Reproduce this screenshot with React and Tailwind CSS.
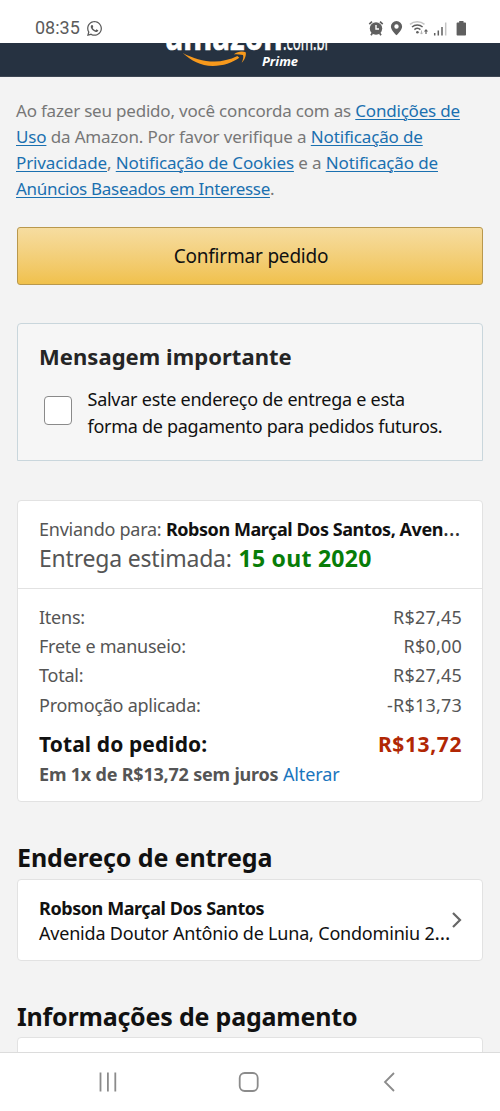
import { FaWhatsapp } from "react-icons/fa";

const summary = [
  { label: "Itens:", value: "R$27,45" },
  { label: "Frete e manuseio:", value: "R$0,00" },
  { label: "Total:", value: "R$27,45" },
  { label: "Promoção aplicada:", value: "-R$13,73" },
];

function Legal({ children }) {
  return (
    <a className="text-[#1a70b0] underline decoration-1 underline-offset-2">
      {children}
    </a>
  );
}

function StatusBar() {
  return (
    <div className="flex h-[43px] shrink-0 items-end justify-between bg-white pr-[32px] pb-[6px] pl-[35px] text-[#5b5b5b]">
      <div className="flex items-center gap-[6px]">
        <span className="font-[Roboto] text-[18px] leading-[18px]">08:35</span>
        <FaWhatsapp className="h-[17px] w-[17px]" />
      </div>

      <svg width="100" height="18" viewBox="0 0 100 18" fill="none">
        {/* alarm */}
        <circle cx="8" cy="9.5" r="6.2" fill="#5f5f5f" />
        <path d="M8 6v4h3" stroke="#fff" strokeWidth="1.4" />
        <path d="M1.3 5.2 4 2.6M14.7 5.2 12 2.6M4.4 14 3 16.3M11.6 14l1.4 2.3" stroke="#5f5f5f" strokeWidth="1.7" />
        {/* location */}
        <path d="M28.500 2a5.600 5.600 0 0 0-5.600 5.600c0 4 5.600 8.700 5.600 8.700s5.600-4.700 5.600-8.700A5.600 5.600 0 0 0 28.500 2Zm0 7.700a2.200 2.200 0 1 1 0-4.400 2.200 2.200 0 0 1 0 4.400Z" fill="#5f5f5f" />
        {/* wifi */}
        <path d="M42 5.400c4-3.400 10.500-3.400 14.500 0" stroke="#c4c4c4" strokeWidth="1.500" />
        <path d="M44 8c3-2.600 7.600-2.600 10.600 0M46.400 10.600c1.800-1.500 4.300-1.500 6 0" stroke="#5f5f5f" strokeWidth="1.500" />
        <circle cx="49.400" cy="13.300" r="1.300" fill="#5f5f5f" />
        <path d="M53.500 11.500v3.500M52.200 13.600l1.300 1.500 1.300-1.500" stroke="#b5b5b5" />
        <path d="M58 15v-3.600" stroke="#5f5f5f" strokeWidth="1.200" />
        <path d="M55.900 12.500 58 10l2.100 2.500Z" fill="#5f5f5f" />
        {/* signal */}
        <path d="M66.700 14v2.500M70.300 11.500v5M74 8v8.500" stroke="#5f5f5f" strokeWidth="1.500" />
        <path d="M77.700 3.500v13" stroke="#c4c4c4" strokeWidth="1.500" />
        {/* battery */}
        <path d="M91.200 2h4.300v1.500h1.700c.5 0 .8.300.8.800v11.400c0 .5-.3.800-.8.800h-7.800c-.5 0-.8-.3-.8-.8V4.300c0-.5.3-.8.800-.8h1.800Z" fill="#5f5f5f" />
      </svg>
    </div>
  );
}

function Logo() {
  return (
    <div className="flex h-[34px] shrink-0 justify-center border-b border-[#3d4653] bg-[#263241]">
      <svg width="180" height="33" viewBox="0 0 180 33" fill="none">
        <text x="5.500" y="6.800" textLength="117" lengthAdjust="spacingAndGlyphs" fill="#fff" stroke="#fff" strokeWidth=".7" fontFamily="Noto Sans, sans-serif" fontWeight="700" fontSize="38">amazon</text>
        <text x="123" y="6.800" textLength="47" lengthAdjust="spacingAndGlyphs" fill="#fff" stroke="#fff" strokeWidth=".3" fontFamily="Noto Sans, sans-serif" fontSize="21">.com.br</text>
        <path d="M22.800 10c8.500 7.500 17.500 12.900 30 13 10.500 0 19.500-3.300 26.500-8.200l-1.900-1.700c-7.400 3.600-15.400 5.500-22.900 5.500-11.500 0-21.600-3.200-31.700-8.600Z" fill="#f7991c" />
        <path d="M74 11.200c3.300-2.700 8.400-3.400 11.700-1.900.8 3-1.200 8.200-4 10.400 1.400-3 2-5.900 1.300-7.700-2-.8-5.700-.3-9-.8Z" fill="#f7991c" />
        <text x="102" y="23" textLength="36" lengthAdjust="spacingAndGlyphs" fill="#fff" fontFamily="Open Sans, sans-serif" fontWeight="700" fontStyle="italic" fontSize="13">Prime</text>
      </svg>
    </div>
  );
}

function NavBar() {
  return (
    <div className="flex h-[59px] shrink-0 items-center justify-center border-t border-[#dcdcdc] bg-white pr-[3px]">
      <svg width="300" height="24" viewBox="0 0 300 24" fill="none" stroke="#8b8b8b" strokeWidth="1.800">
        <path d="M1.500 2.500v19M8.900 2.500v19M16.300 2.500v19" />
        <rect x="140.700" y="3" width="18" height="18" rx="5" />
        <path d="m295 3-9 9 9 9" />
      </svg>
    </div>
  );
}

export default function App() {
  return (
    <div className="flex h-[1111px] w-[500px] flex-col overflow-hidden bg-[#f3f3f3] font-['Noto_Sans',sans-serif] whitespace-nowrap text-[#111]">
      <StatusBar />
      <Logo />

      <main className="flex min-h-0 flex-1 flex-col overflow-hidden px-[17px] pt-[21px]">
        <div className="-ml-px text-[17px] leading-[26px] text-[#777]">
          <p className="tracking-[-0.2px]">
            Ao fazer seu pedido, você concorda com as <Legal>Condições de</Legal>
          </p>
          <p className="tracking-[-0.15px]">
            <Legal>Uso</Legal> da Amazon. Por favor verifique a <Legal>Notificação de</Legal>
          </p>
          <p className="tracking-[-0.13px]">
            <Legal>Privacidade</Legal>, <Legal>Notificação de Cookies</Legal> e a <Legal>Notificação de</Legal>
          </p>
          <p className="tracking-[-0.3px]">
            <Legal>Anúncios Baseados em Interesse</Legal>.
          </p>
        </div>

        <button className="mt-[25px] h-[58px] shrink-0 rounded-[3px] border border-[#b9984c] bg-linear-to-b from-[#f6dda0] to-[#f0c14b] pl-[2px] text-[19px] tracking-[-0.2px]">
          Confirmar pedido
        </button>

        <section className="mt-[38px] h-[138px] shrink-0 rounded-t-[4px] border border-[#c9d6dc] bg-[#f6f6f6] px-[21px] pt-[17px]">
          <h2 className="text-[22px] leading-[30px] font-bold tracking-[0.05px] text-[#252525]">
            Mensagem importante
          </h2>
          <div className="mt-[15px] flex">
            <span className="mt-[10px] ml-[5px] h-[29px] w-[28px] rounded-[4px] border border-[#8a8a8a] bg-white" />
            <p className="ml-[15.500px] text-[18px] leading-[27px]">
              <span className="block tracking-[-0.25px]">Salvar este endereço de entrega e esta</span>
              <span className="block tracking-[-0.28px]">forma de pagamento para pedidos futuros.</span>
            </p>
          </div>
        </section>

        <section className="mt-[39px] flex h-[302px] shrink-0 flex-col rounded-[4px] border border-[#e2e2e2] bg-white text-[18px]">
          <div className="h-[88px] shrink-0 border-b border-[#e2e2e2] px-[21px] pt-[14px] text-[#555]">
            <p className="leading-[28px] tracking-[-0.25px]">
              Enviando para: <b className="tracking-[-0.44px] text-[#111]">Robson Marçal Dos Santos, Aven</b>
              <span className="text-[22px] leading-none text-[#333]">…</span>
            </p>
            <p className="mt-px text-[23px] leading-[28px] tracking-[-0.2px]">
              Entrega estimada: <b className="ml-px tracking-[0.25px] text-[#087d08]">15 out 2020</b>
            </p>
          </div>
          <div className="px-[21px] pt-[14px] text-[#555]">
            {summary.map((row) => (
              <div key={row.label} className="flex justify-between leading-[29.200px]">
                <span className="tracking-[-0.25px]">{row.label}</span>
                <span className="-mr-px tracking-[0.2px]">{row.value}</span>
              </div>
            ))}
            <div className="mt-[8px] flex justify-between text-[21px] leading-[32px] font-bold">
              <span className="tracking-[0.1px] text-[#111]">Total do pedido:</span>
              <span className="-mr-px tracking-[0.6px] text-[#b12704]">R$13,72</span>
            </div>
            <p className="text-[18px] leading-[29px] tracking-[-0.2px]">
              <b>Em 1x de R$13,72 sem juros</b> <a className="tracking-[-0.1px] text-[#1a75bd]">Alterar</a>
            </p>
          </div>
        </section>

        <h2 className="mt-[37px] text-[25px] leading-[36px] font-bold tracking-[-0.1px]">
          Endereço de entrega
        </h2>
        <section className="mt-[4px] flex h-[82px] shrink-0 items-center justify-between rounded-[4px] border border-[#e2e2e2] bg-white pr-[19px] pl-[21px] text-[18px]">
          <div className="pt-[2px] leading-[25px]">
            <p className="font-bold tracking-[-0.42px]">Robson Marçal Dos Santos</p>
            <p className="tracking-[-0.2px]">
              Avenida Doutor Antônio de Luna, Condominiu 2
              <span className="text-[20px] leading-none">…</span>
            </p>
          </div>
          <svg className="-ml-2" width="12" height="18" viewBox="0 0 12 18" fill="none" stroke="#666" strokeWidth="2.200">
            <path d="m2 2 7 7-7 7" />
          </svg>
        </section>

        <h2 className="mt-[37px] text-[25px] leading-[36px] font-bold tracking-[-0.2px]">
          Informações de pagamento
        </h2>
        <section className="mt-[3px] h-[60px] shrink-0 rounded-[4px] border border-[#e2e2e2] bg-white" />
      </main>

      <NavBar />
    </div>
  );
}
